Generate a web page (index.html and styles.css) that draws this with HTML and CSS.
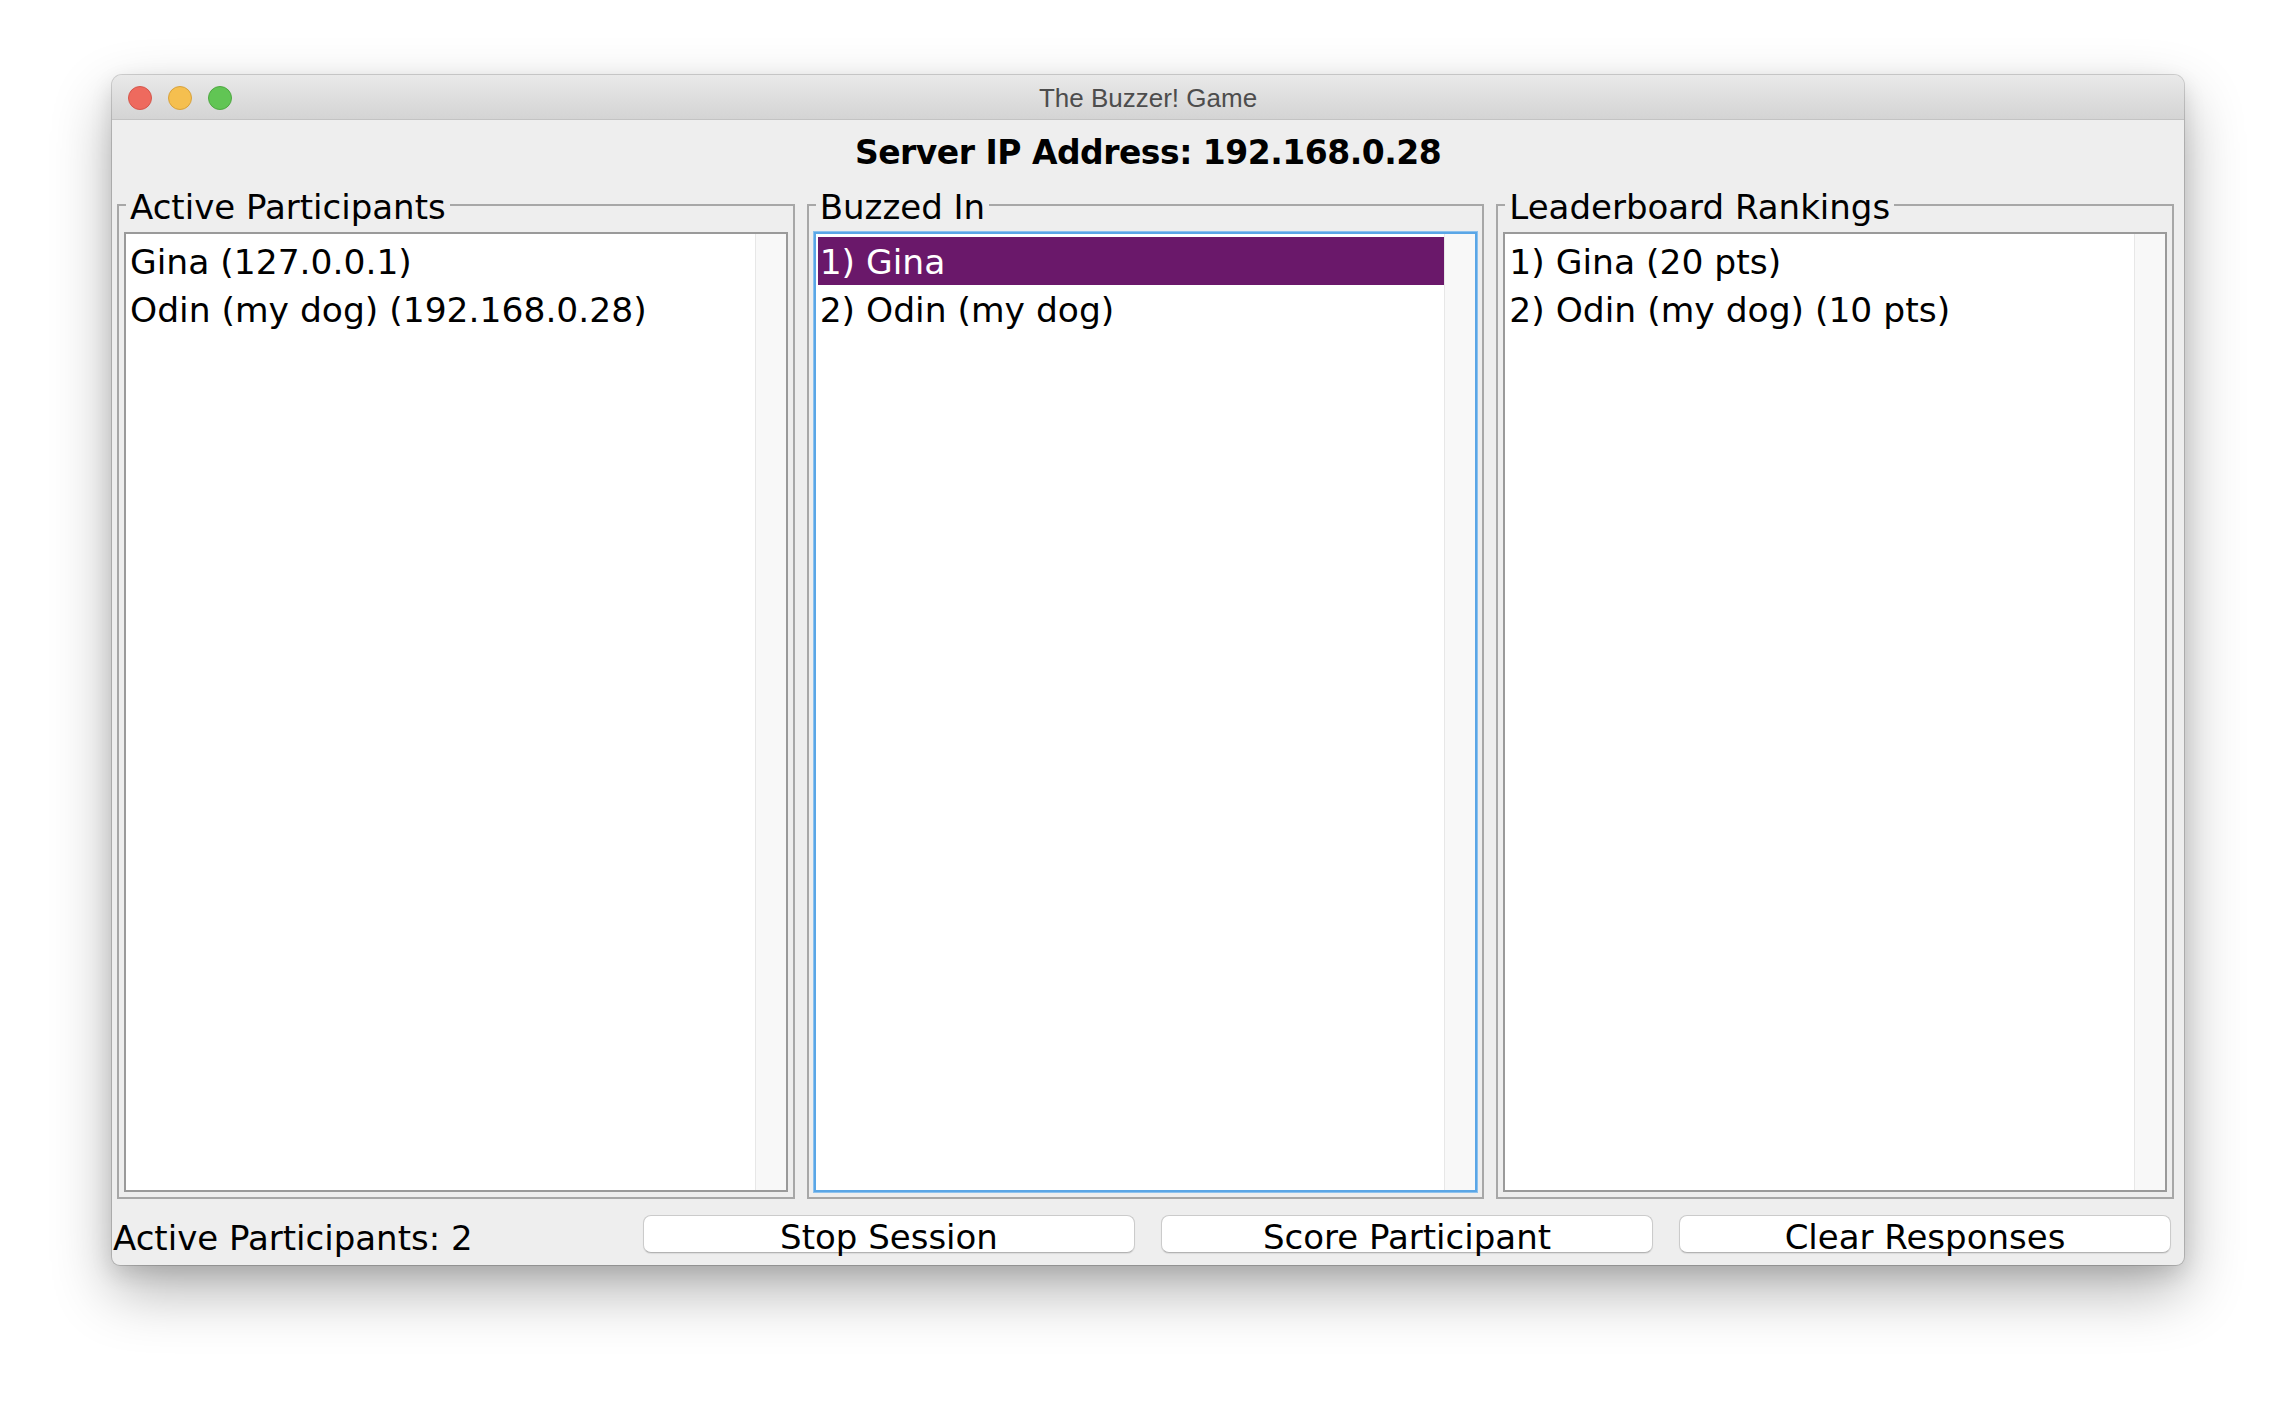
FILE: index.html
```html
<!DOCTYPE html>
<html lang="en">
<head>
<meta charset="utf-8">
<title>The Buzzer! Game</title>
<link rel="stylesheet" href="styles.css">
</head>
<body>
<div class="window">
  <div class="titlebar">
    <div class="lights">
      <span class="light red"></span>
      <span class="light yellow"></span>
      <span class="light green"></span>
    </div>
    <div class="title">The Buzzer! Game</div>
    <div></div>
  </div>
  <div class="content">
    <div class="header">Server IP Address: 192.168.0.28</div>
    <div class="panels">
      <fieldset class="panel">
        <legend>Active Participants</legend>
        <div class="list">
          <ul class="items">
            <li>Gina (127.0.0.1)</li>
            <li>Odin (my dog) (192.168.0.28)</li>
          </ul>
          <div class="track"></div>
        </div>
      </fieldset>
      <fieldset class="panel">
        <legend>Buzzed In</legend>
        <div class="list focused">
          <ul class="items">
            <li class="selected">1) Gina</li>
            <li>2) Odin (my dog)</li>
          </ul>
          <div class="track"></div>
        </div>
      </fieldset>
      <fieldset class="panel">
        <legend>Leaderboard Rankings</legend>
        <div class="list">
          <ul class="items">
            <li>1) Gina (20 pts)</li>
            <li>2) Odin (my dog) (10 pts)</li>
          </ul>
          <div class="track"></div>
        </div>
      </fieldset>
    </div>
    <div class="footer">
      <div class="count">Active Participants: 2</div>
      <button class="btn">Stop Session</button>
      <button class="btn">Score Participant</button>
      <button class="btn">Clear Responses</button>
    </div>
  </div>
</div>
</body>
</html>
```

FILE: styles.css
```css
html, body {
  margin: 0;
  padding: 0;
  background: #ffffff;
}

body {
  width: 2296px;
  height: 1414px;
  overflow: hidden;
}

.window {
  margin: 75px 0 0 112px;
  width: 2072px;
  height: 1190px;
  border-radius: 10px 10px 8px 8px;
  background: #eeeeee;
  box-shadow: 0 0 0 1px rgba(0, 0, 0, 0.16),
              0 26px 60px rgba(0, 0, 0, 0.30),
              0 8px 22px rgba(0, 0, 0, 0.12);
  display: flex;
  flex-direction: column;
  overflow: hidden;
}

.titlebar {
  height: 44px;
  flex: none;
  border-bottom: 1px solid #c3c3c3;
  background: linear-gradient(#e9e9e9, #d4d4d4);
  display: grid;
  grid-template-columns: 1fr auto 1fr;
  align-items: center;
}

.lights {
  display: flex;
  gap: 16px;
  padding-left: 16px;
  padding-top: 1px;
}

.light {
  width: 24px;
  height: 24px;
  border-radius: 50%;
  box-sizing: border-box;
  border: 1px solid;
}

.light.red { background: #ee6a5e; border-color: #d5574c; }
.light.yellow { background: #f5bf4f; border-color: #d8a23c; }
.light.green { background: #61c554; border-color: #4fa842; }

.title {
  font-family: "Liberation Sans", Arial, sans-serif;
  font-size: 26px;
  color: #4d4d4d;
  padding-top: 2px;
}

.content {
  flex: 1;
  display: flex;
  flex-direction: column;
  min-height: 0;
  font-family: "DejaVu Sans", "Noto Sans", sans-serif;
  font-size: 34px;
  color: #000000;
}

.header {
  flex: none;
  height: 61px;
  padding-top: 2px;
  line-height: 61px;
  text-align: center;
  font-weight: bold;
  font-size: 33px;
  letter-spacing: -0.5px;
}

.panels {
  flex: 1;
  min-height: 0;
  display: grid;
  grid-template-columns: repeat(3, 1fr);
  gap: 12px;
  padding: 0 10px 0 5px;
}

.panel {
  margin: 0;
  padding: 5px;
  border: 2px solid #a7a7a7;
  display: flex;
  flex-direction: column;
  min-width: 0;
  min-height: 0;
}

.panel legend {
  margin-left: 2px;
  padding: 4px 4px 0;
  line-height: 40px;
  font-size: 34px;
}

.list {
  flex: 1;
  min-height: 0;
  display: flex;
  background: #ffffff;
  border: 2px solid #9a9a9a;
}

.list.focused {
  border-color: #5aa6e6;
  box-shadow: 0 0 0 1px #8cc1ee;
}

.items {
  flex: 1;
  min-width: 0;
  list-style: none;
  margin: 0;
  padding: 3px 0 0 2px;
  font-size: 34.5px;
}

.items li {
  height: 45px;
  padding-top: 3px;
  line-height: 45px;
  padding-left: 2px;
  white-space: nowrap;
}

.items li.selected {
  background: #6a186a;
  color: #ffffff;
}

.track {
  width: 30px;
  flex: none;
  background: #f8f8f8;
  border-left: 1px solid #e7e7e7;
}

.footer {
  flex: none;
  height: 66px;
  display: grid;
  grid-template-columns: repeat(4, 1fr);
  align-items: start;
}

.count {
  padding: 20px 0 0 1px;
  line-height: 38px;
  white-space: nowrap;
}

.btn {
  margin: 16px 13px 0;
  height: 38px;
  padding: 1px 0 0;
  line-height: 34px;
  font: inherit;
  color: #000000;
  background: #ffffff;
  border: 1px solid #cbcbcb;
  border-bottom-color: #b3b3b3;
  border-radius: 8px;
  box-shadow: 0 1px 1px rgba(0, 0, 0, 0.08);
  white-space: nowrap;
}
```
